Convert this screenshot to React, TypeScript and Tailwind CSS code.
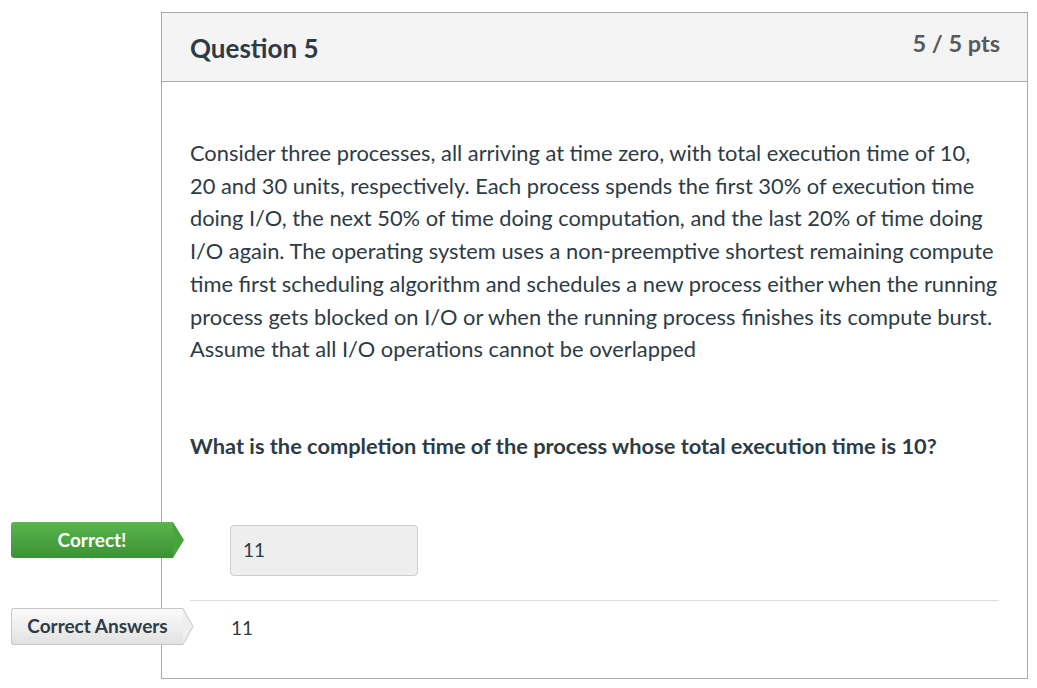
import React from "react";

const font = { fontFamily: "Lato, 'Noto Sans', sans-serif" };

function Tag({ label, green }: { label: string; green?: boolean }) {
  return (
    <div className={green ? "absolute left-[-179px] top-px flex items-center" : "absolute left-[-179px] top-0 flex items-center"}>
      <div
        className={
          green
            ? "h-[36px] w-[162px] flex items-center justify-center rounded-l-[3px] bg-gradient-to-b from-[#5ab54e] to-[#3b9233] text-white text-[19px] font-bold"
            : "h-[37px] w-[172px] flex items-center justify-center rounded-l-[3px] border border-[#c7c7c7] border-r-0 bg-gradient-to-b from-[#fafafa] to-[#e2e2e2] text-[#2d3b45] text-[19px] font-bold"
        }
      >
        {label}
      </div>
      <svg width="11" height={green ? 36 : 37} viewBox={green ? "0 0 11 36" : "0 0 11 37"} className="block">
        {green ? (
          <polygon points="0,0 0,36 11,18" fill="#49a33f" />
        ) : (
          <>
            <polygon points="0,0 0,37 10,18.5" fill="#eeeeee" />
            <polyline points="0,0.5 10,18.5 0,36.5" fill="none" stroke="#c7c7c7" strokeWidth="1" />
          </>
        )}
      </svg>
    </div>
  );
}

export default function App() {
  return (
    <div className="min-h-[688px] bg-white pt-[12px] pl-[161px]" style={font}>
      <div className="w-[867px] h-[667px] border border-[#aaaaaa] flex flex-col">
        <div className="h-[69px] bg-[#f4f4f4] border-b border-[#aaaaaa] flex items-start justify-between pl-[28px] pr-[27px]">
          <h2 className="text-[26px] leading-[34px] font-bold text-[#2d3b45] mt-[18px]">Question 5</h2>
          <div className="text-[23.5px] leading-[30px] font-bold text-[#555a5e] mt-[15px]">5 / 5 pts</div>
        </div>
        <div className="pl-[28px] pr-[28px] pt-[55px] text-[#2d3b45]">
          <p className="w-[809px] text-[21.85px] leading-[32.7px]">
            Consider three processes, all arriving at time zero, with total execution time of 10, 20 and 30 units,
            respectively. Each process spends the first 30% of execution time doing I/O, the next 50% of time doing
            computation, and the last 20% of time doing I/O again. The operating system uses a non-preemptive shortest
            remaining compute time first scheduling algorithm and schedules a new process either when the running
            process gets blocked on I/O or when the running process finishes its compute burst. Assume that all I/O
            operations cannot be overlapped
          </p>
          <p className="mt-[64px] text-[21.8px] leading-[32px] font-bold">
            What is the completion time of the process whose total execution time is 10?
          </p>
          <div className="relative mt-[59px] flex items-start">
            <Tag label="Correct!" green />
            <div className="ml-[40px] mt-[4px] w-[188px] h-[51px] rounded-[4px] border border-[#cccccc] bg-[#eeeeee] flex items-center pl-[12px] text-[19px] text-[#2d3b45]">
              11
            </div>
          </div>
          <div className="mt-[24px] border-t border-[#dddddd]" />
          <div className="relative mt-[7px] flex items-start">
            <Tag label="Correct Answers" />
            <div className="ml-[41px] h-[37px] flex items-center pt-[3px] text-[19px] text-[#2d3b45]">11</div>
          </div>
        </div>
      </div>
    </div>
  );
}
